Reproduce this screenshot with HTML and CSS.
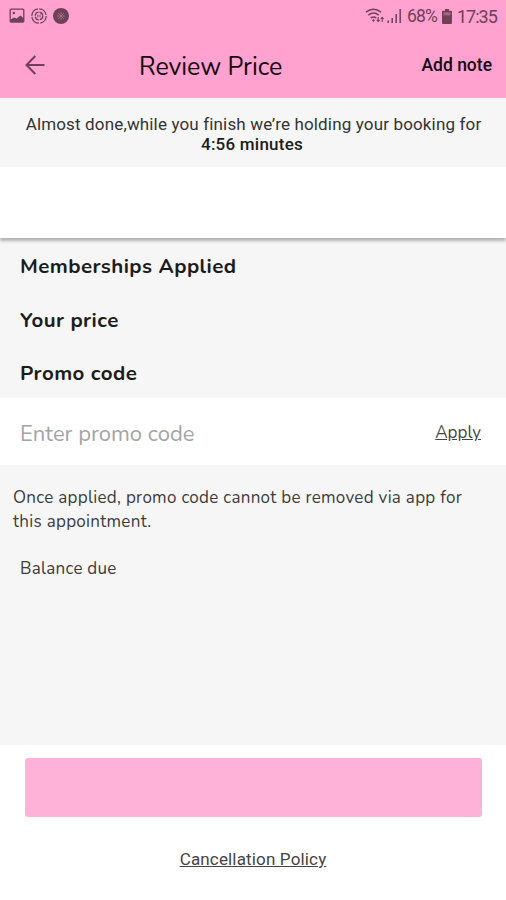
FILE: index.html
```html
<!DOCTYPE html>
<html lang="en">
<head>
<meta charset="utf-8">
<title>Review Price</title>
<link rel="stylesheet" href="styles.css">
</head>
<body>
<div class="screen">
  <header class="top">
    <div class="status">
      <div class="status-left">
        <svg class="icon-16" viewBox="0 0 16 16"><rect x="1.2" y="1.2" width="13.6" height="12.8" rx="1" fill="none" stroke="currentColor" stroke-width="1.3"/><circle cx="4.8" cy="5" r="1.2" fill="currentColor"/><path d="M1.5 11.5l3.7-2 2.4 1 3.8-3L14.5 10v4h-13z" fill="currentColor"/></svg>
        <svg class="icon-16" viewBox="0 0 16 16" fill="none" stroke="currentColor" stroke-width="1.3"><circle cx="8" cy="8" r="7.2" stroke-dasharray="10 1.3"/><circle cx="8" cy="8" r="3.8" stroke-dasharray="5 1"/><path d="M6.9 6.8v2.4M9.1 6.8v2.4" stroke-width="1"/></svg>
        <svg class="icon-16" viewBox="0 0 16 16"><circle cx="8" cy="8" r="8" fill="currentColor"/><path d="M5 5l6 6M11 5l-6 6M8 4v8M4 8h8" stroke="#a66886" stroke-width=".9"/></svg>
      </div>
      <div class="status-right">
        <svg class="wifi" viewBox="0 0 20 16" fill="none" stroke="currentColor" stroke-width="1.5"><path d="M1 4.2q7.5-6 15 0M3.3 7.2q5.2-4.3 10.4 0M5.7 10.1q2.8-2.3 5.6 0"/><path d="M7 12.2L8.5 11l1.5 1.2-1.5 1.8z" fill="currentColor" stroke="none"/><path d="M13.2 9v4M11.7 11.8l1.5 1.7 1.5-1.7M17.2 14V9.5M15.8 11l1.4-1.6 1.4 1.6" stroke-width="1.1"/></svg>
        <svg class="signal" viewBox="0 0 15 14" fill="none" stroke="currentColor" stroke-width="1.5"><path d="M1.2 14v-2.5M5.2 14V9M9.2 14V5M13.2 14V0"/></svg>
        <span class="pct">68%</span>
        <svg class="battery" viewBox="0 0 10 15"><path d="M3 0h4v1.7h2a1 1 0 011 1V14a1 1 0 01-1 1H1a1 1 0 01-1-1V2.7a1 1 0 011-1h2z" fill="currentColor"/><path d="M1.5 3.5h7v2.8h-7z" fill="#a66886"/></svg>
        <span class="clock">17:35</span>
      </div>
    </div>
    <div class="bar">
      <svg class="back" viewBox="0 0 20 20" fill="none" stroke="currentColor" stroke-width="2"><path d="M19.5 10H1.5M10.3 1L1.5 10l8.8 9"/></svg>
      <h1 class="title">Review Price</h1>
      <span class="add">Add note</span>
    </div>
  </header>
  <div class="notice"><div class="notice-text">Almost done,while you finish we’re holding your booking for</div><div class="notice-time">4:56 minutes</div></div>
  <div class="blank"></div>
  <main class="content">
    <h2 class="heading">Memberships Applied</h2>
    <h2 class="heading">Your price</h2>
    <h2 class="heading promo">Promo code</h2>
    <div class="entry"><span class="placeholder">Enter promo code</span><span class="apply">Apply</span></div>
    <p class="note">Once applied, promo code cannot be removed via app for<br>this appointment.</p>
    <p class="balance">Balance due</p>
  </main>
  <footer class="footer"><div class="pay"></div><span class="policy">Cancellation Policy</span></footer>
</div>
</body>
</html>
```
FILE: styles.css
```css
* { box-sizing: border-box; }
body { margin: 0; }
.screen { width: 506px; height: 900px; display: flex; flex-direction: column; background: #fff; color: #1c1c1c; font-family: Nunito, Lato, sans-serif; overflow: hidden; white-space: nowrap; }
h1, h2, p { margin: 0; }
svg { display: block; flex: none; }
.top { height: 98px; flex: none; background: #ffa2cf; }
.status { height: 32px; padding: 0 9px; display: flex; justify-content: space-between; align-items: center; color: #704058; font-family: Roboto, sans-serif; }
.status-left, .status-right { display: flex; align-items: center; }
.status-left { gap: 6px; }
.icon-16 { width: 16px; height: 16px; }
.wifi { width: 20px; height: 16px; }
.signal { width: 15px; height: 14px; margin-left: 2px; }
.pct { font-size: 17.5px; margin-left: 5px; letter-spacing: -.8px; width: 30px; }
.battery { width: 10px; height: 15px; margin-left: 5px; }
.clock { font-size: 18px; margin-left: 5px; letter-spacing: -1px; width: 40px; }
.bar { height: 66px; display: flex; align-items: center; padding: 0 14px 0 25px; }
.back { width: 20px; height: 20px; color: #704058; }
.title { margin-left: 94px; padding-top: 3px; font-size: 25px; font-weight: 400; letter-spacing: -.05px; color: #15080f; }
.add { margin-left: auto; font: 500 17.5px Roboto, sans-serif; color: #15080f; }
.notice { height: 69px; flex: none; padding-top: 16px; background: #f6f6f6; text-align: center; font: 17px/20px Roboto, sans-serif; }
.notice-text { color: #333; letter-spacing: .15px; padding-left: 1px; }
.notice-time { font-weight: 500; letter-spacing: .23px; padding-right: 2px; }
.blank { height: 71px; flex: none; background: #fff; position: relative; box-shadow: 0 3px 3px rgba(0,0,0,.28); }
.content { height: 507px; flex: none; background: #f6f6f6; padding-top: 1px; }
.heading { height: 53.5px; padding-left: 20px; font-size: 20.5px; line-height: 54px; font-weight: 700; letter-spacing: .43px; }
.promo { height: 52px; }
.entry { height: 67px; display: flex; justify-content: space-between; align-items: center; padding: 2px 25px 0 20px; background: #fff; }
.placeholder { color: #a4a4a4; font-size: 22px; padding-top: 2px; }
.apply { font-size: 17px; text-decoration: underline; color: #444; }
.note { padding: 21px 13px 0; font-size: 17px; line-height: 23.5px; letter-spacing: .29px; color: #3c3c3c; }
.balance { padding: 24px 20px 0; font-size: 17px; line-height: 23px; letter-spacing: .25px; color: #3c3c3c; }
.footer { flex: 1; display: flex; flex-direction: column; align-items: center; padding-top: 13px; }
.pay { width: 457px; height: 59px; border-radius: 3px; background: #ffb2d8; }
.policy { margin-top: 31px; font: 17px/22px Roboto, sans-serif; letter-spacing: .16px; text-decoration: underline; color: #444; }
```
